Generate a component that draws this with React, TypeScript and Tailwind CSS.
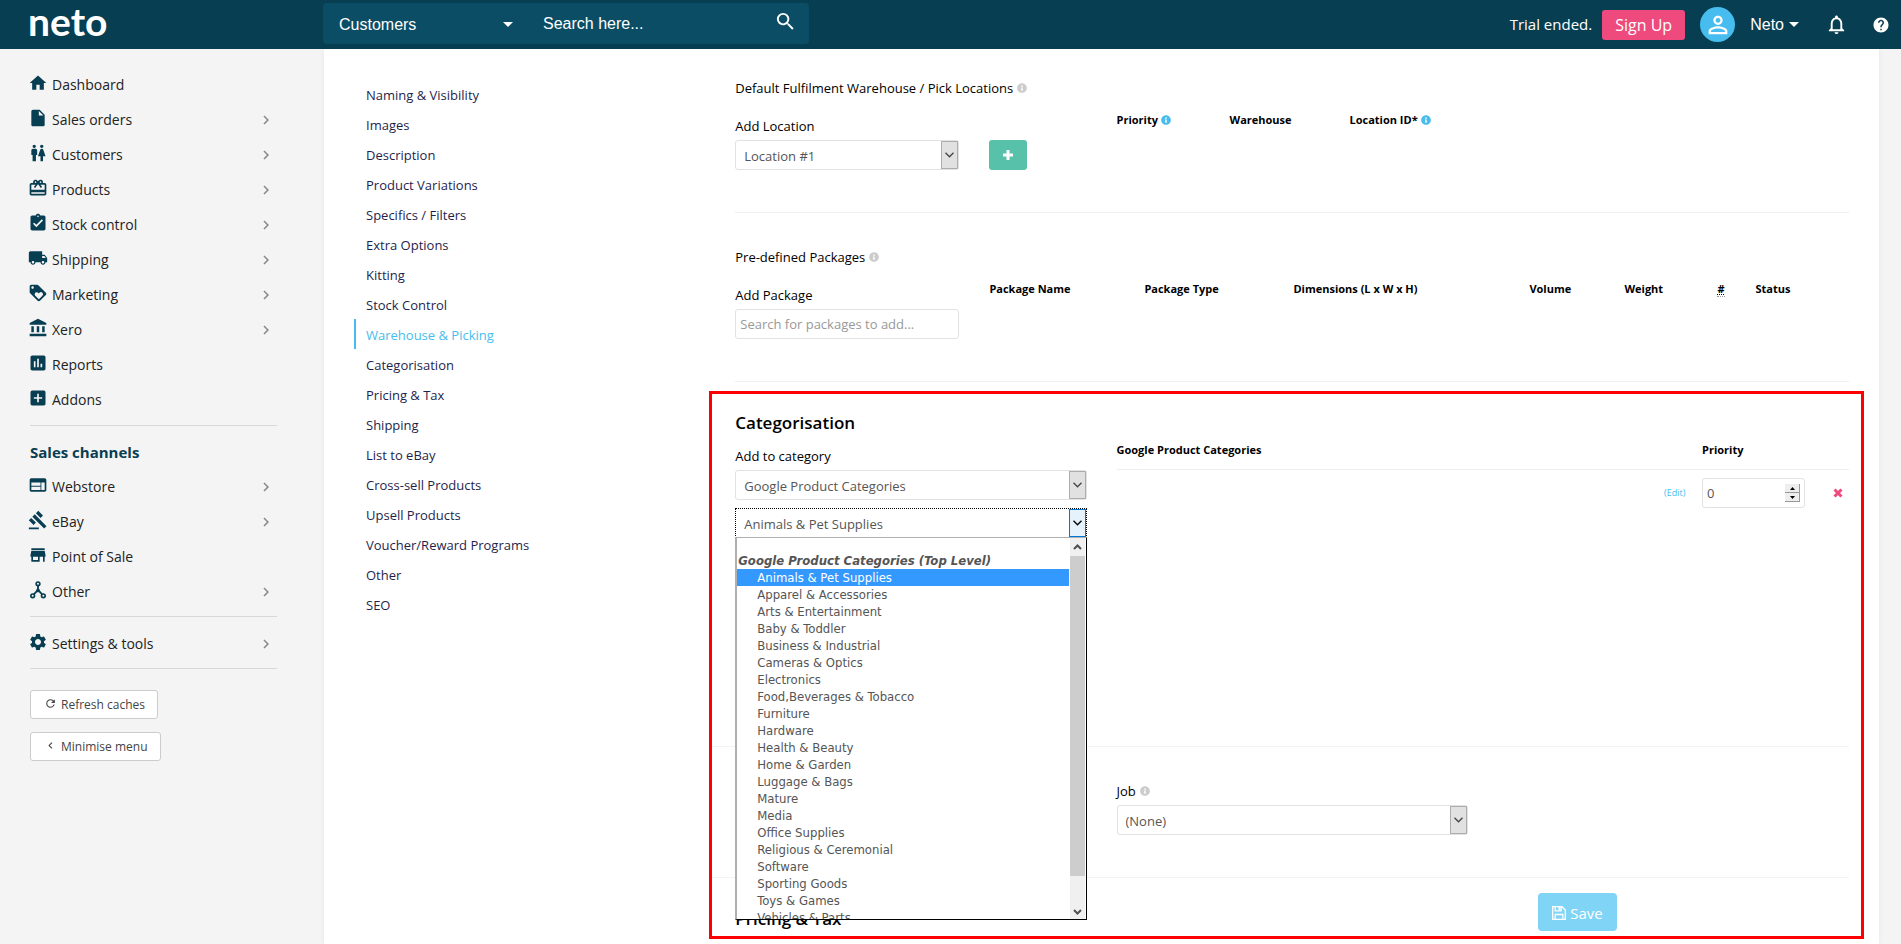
import type { ReactNode } from "react";
import type { IconType } from "react-icons";
import {
  MdAccountBalance,
  MdAddBox,
  MdAssessment,
  MdAssignmentTurnedIn,
  MdCardGiftcard,
  MdChevronLeft,
  MdChevronRight,
  MdGavel,
  MdHelp,
  MdHome,
  MdInsertDriveFile,
  MdLocalShipping,
  MdLoyalty,
  MdNotificationsNone,
  MdPersonOutline,
  MdRefresh,
  MdSearch,
  MdSettings,
  MdStore,
  MdWc,
  MdWeb,
} from "react-icons/md";
import { FaInfoCircle } from "react-icons/fa";

function HubIcon({ className }: { className?: string }) {
  return (
    <svg
      viewBox="0 0 24 24"
      className={className}
      fill="none"
      stroke="currentColor"
      strokeWidth="2"
      aria-hidden="true"
    >
      <circle cx="12" cy="4.6" r="2.2" />
      <circle cx="5.6" cy="19" r="2.2" />
      <circle cx="18.400" cy="19" r="2.2" />
      <path d="M12 7v6M11.500 12.500l-4.500 4.800M12.500 12.500l4.500 4.800" strokeWidth="2.200" />
      <circle cx="12" cy="12.500" r="1.200" fill="currentColor" />
    </svg>
  );
}

type MenuItem = {
  label: string;
  icon: IconType | typeof HubIcon;
  more?: boolean;
};

const mainMenu: MenuItem[] = [
  { label: "Dashboard", icon: MdHome },
  { label: "Sales orders", icon: MdInsertDriveFile, more: true },
  { label: "Customers", icon: MdWc, more: true },
  { label: "Products", icon: MdCardGiftcard, more: true },
  { label: "Stock control", icon: MdAssignmentTurnedIn, more: true },
  { label: "Shipping", icon: MdLocalShipping, more: true },
  { label: "Marketing", icon: MdLoyalty, more: true },
  { label: "Xero", icon: MdAccountBalance, more: true },
  { label: "Reports", icon: MdAssessment },
  { label: "Addons", icon: MdAddBox },
];

const channelMenu: MenuItem[] = [
  { label: "Webstore", icon: MdWeb, more: true },
  { label: "eBay", icon: MdGavel, more: true },
  { label: "Point of Sale", icon: MdStore },
  { label: "Other", icon: HubIcon, more: true },
];

const settingsMenu: MenuItem[] = [
  { label: "Settings & tools", icon: MdSettings, more: true },
];

const sections = [
  "Naming & Visibility",
  "Images",
  "Description",
  "Product Variations",
  "Specifics / Filters",
  "Extra Options",
  "Kitting",
  "Stock Control",
  "Warehouse & Picking",
  "Categorisation",
  "Pricing & Tax",
  "Shipping",
  "List to eBay",
  "Cross-sell Products",
  "Upsell Products",
  "Voucher/Reward Programs",
  "Other",
  "SEO",
];

const categories = [
  "Animals & Pet Supplies",
  "Apparel & Accessories",
  "Arts & Entertainment",
  "Baby & Toddler",
  "Business & Industrial",
  "Cameras & Optics",
  "Electronics",
  "Food,Beverages & Tobacco",
  "Furniture",
  "Hardware",
  "Health & Beauty",
  "Home & Garden",
  "Luggage & Bags",
  "Mature",
  "Media",
  "Office Supplies",
  "Religious & Ceremonial",
  "Software",
  "Sporting Goods",
  "Toys & Games",
  "Vehicles & Parts",
];

function Caret() {
  return (
    <svg viewBox="0 0 10 5" className="h-[5px] w-[10px]" aria-hidden="true">
      <path d="M0 0h10L5 5z" fill="currentColor" />
    </svg>
  );
}

function Info({ blue }: { blue?: boolean }) {
  return (
    <FaInfoCircle
      className={`size-[10px] shrink-0 ${blue ? "text-[#46bdee]" : "text-[#cccccc]"}`}
      aria-hidden="true"
    />
  );
}

function Header() {
  return (
    <header className="flex h-[49px] items-center bg-[#083e52] text-base text-white">
      <a
        href="#home"
        className="w-[323px] shrink-0 pb-2 pl-7 font-[Lato] text-[39px] leading-[40px] font-bold"
      >
        neto
      </a>
      <form className="mb-[2px] flex h-[41px] min-w-0 flex-[0_1_486px] items-center rounded bg-[#0b4d65] font-['Liberation_Sans',sans-serif]">
        <div className="relative h-full w-[205px] shrink-0">
          <select
            aria-label="Search in"
            className="h-full w-full appearance-none bg-transparent pt-[3px] pl-4 outline-none"
          >
            <option>Customers</option>
          </select>
          <span className="pointer-events-none absolute top-[19px] right-[15px]">
            <Caret />
          </span>
        </div>
        <input
          type="text"
          aria-label="Search"
          placeholder="Search here..."
          className="h-full min-w-0 flex-1 bg-transparent pl-[15px] outline-none placeholder:text-white"
        />
        <button type="button" aria-label="Search" className="mr-3 mb-1">
          <MdSearch className="size-[23px]" />
        </button>
      </form>
      <div className="ml-auto flex shrink-0 items-center font-['Open_Sans',sans-serif]">
        <span className="text-[15px]">Trial ended.</span>
        <button
          type="button"
          className="ml-[10px] h-[30px] w-[83px] rounded-[3px] bg-[#ef4a7e]"
        >
          Sign Up
        </button>
        <span className="ml-[15px] flex size-[35px] items-center justify-center rounded-full bg-[#46bdee]">
          <MdPersonOutline className="size-[28px]" />
        </span>
        <button
          type="button"
          className="ml-[15px] flex items-center gap-[5px] font-['Liberation_Sans',sans-serif]"
        >
          Neto
          <Caret />
        </button>
        <button type="button" aria-label="Notifications" className="ml-[26px]">
          <MdNotificationsNone className="size-[23px]" />
        </button>
        <button type="button" aria-label="Help" className="mr-[11px] ml-6">
          <MdHelp className="size-[18px]" />
        </button>
      </div>
    </header>
  );
}

function Menu({ items }: { items: MenuItem[] }) {
  return (
    <ul>
      {items.map(({ label, icon: Icon, more }) => (
        <li key={label}>
          <a href="#menu" className="-ml-[2px] flex h-[35px] items-center gap-1">
            <Icon className="mb-[3px] size-5 text-[#083e52]" />
            <span className="flex-1">{label}</span>
            {more && <MdChevronRight className="mr-[2px] size-[18px] text-[#888888]" />}
          </a>
        </li>
      ))}
    </ul>
  );
}

function SideButton({ icon, children }: { icon: ReactNode; children: ReactNode }) {
  return (
    <button
      type="button"
      className="mb-[13px] flex h-[29px] items-center gap-1 rounded-[3px] border border-[#cccccc] bg-white pr-3 pl-[13px] text-[12px] text-[#444444]"
    >
      {icon}
      {children}
    </button>
  );
}

function Sidebar() {
  return (
    <aside className="w-[324px] shrink-0 pt-[18px] pr-[47px] pl-[30px] text-[14px] text-[#222222]">
      <Menu items={mainMenu} />
      <hr className="mt-2 border-[#d8d8d8]" />
      <h2 className="flex h-[43px] items-center pt-[9px] text-[15px] font-bold text-[#083e52]">
        Sales channels
      </h2>
      <Menu items={channelMenu} />
      <hr className="mt-[7px] mb-[9px] border-[#d8d8d8]" />
      <Menu items={settingsMenu} />
      <hr className="mt-[7px] mb-[21px] border-[#d8d8d8]" />
      <SideButton icon={<MdRefresh className="mb-[3px] size-[13px]" />}>
        Refresh caches
      </SideButton>
      <SideButton icon={<MdChevronLeft className="mb-[3px] size-[13px]" />}>
        Minimise menu
      </SideButton>
    </aside>
  );
}

function SectionNav() {
  return (
    <nav className="w-1/4 shrink-0 px-[15px] pt-[30px] text-[13px] text-[#1f1f4d]">
      {sections.map((name) => (
        <a
          key={name}
          href="#section"
          className={`flex h-[30px] items-center border-l-2 pt-[3px] pl-[10px] ${
            name === "Warehouse & Picking"
              ? "border-[#46bdee] font-medium text-[#46bdee]"
              : "border-transparent"
          }`}
        >
          {name}
        </a>
      ))}
    </nav>
  );
}

function SelectBox({
  id,
  value,
  open,
  label,
}: {
  id: string;
  value: string;
  open?: boolean;
  label?: string;
}) {
  return (
    <div className="relative h-[30px]">
      <select
        id={id}
        aria-label={label}
        className={`h-full w-full appearance-none bg-white pt-[3px] pl-2 text-[13px] text-[#555555] outline-none ${
          open ? "border border-dotted border-black" : "rounded-[3px] border border-[#e2e2e2]"
        }`}
      >
        <option>{value}</option>
      </select>
      <span
        className={`pointer-events-none absolute top-px right-px bottom-px flex w-[17px] items-center justify-center border ${
          open
            ? "border-[#0078d7] bg-[#e5f1fb] text-black"
            : "border-[#adadad] bg-[#e1e1e1] text-[#444444]"
        }`}
      >
        <svg viewBox="0 0 9 6" className="h-[6px] w-[9px]" fill="none" stroke="currentColor">
          <path d="M.5.8l4 4 4-4" strokeWidth="1.3" />
        </svg>
      </span>
    </div>
  );
}

function CategoryList() {
  return (
    <div className="absolute top-full right-0 left-0 z-10 -mt-px flex h-[383px] border-t border-r border-b border-l-2 border-t-[#b0b0b0] border-r-black border-b-black border-l-[#b0b0b0] bg-white font-['DejaVu_Sans_Condensed',sans-serif] text-[13px] leading-[17px] text-[#555555]">
      <div className="flex-1 overflow-hidden pt-[14px]">
        <div className="pl-px font-bold italic">Google Product Categories (Top Level)</div>
        <ul role="listbox" aria-label="Google Product Categories">
          {categories.map((name, i) => (
            <li
              key={name}
              role="option"
              aria-selected={i === 0}
              className={`pl-5 ${i === 0 ? "bg-[#3399ff] text-white" : ""}`}
            >
              {name}
            </li>
          ))}
        </ul>
      </div>
      <div className="mr-px ml-px flex w-[15px] flex-col items-center bg-[#f0f0f0] text-[#505050]">
        <svg viewBox="0 0 9 6" className="my-[6px] h-[6px] w-[9px]" fill="none" stroke="currentColor">
          <path d="M1 5l3.500-3.500L8 5" strokeWidth="2" />
        </svg>
        <div className="h-[320px] w-full bg-[#cdcdcd]" />
        <svg viewBox="0 0 9 6" className="mt-auto mb-1 h-[6px] w-[9px]" fill="none" stroke="currentColor">
          <path d="M1 1l3.500 3.500L8 1" strokeWidth="2" />
        </svg>
      </div>
    </div>
  );
}

const th = "p-0 text-left align-top font-bold whitespace-nowrap";

function Locations() {
  return (
    <section className="border-b border-[#f0f0f0] pt-[29px] pb-[42px]">
      <h3 className="flex items-center gap-1 text-[13px] leading-5 font-medium">
        Default Fulfilment Warehouse / Pick Locations <Info />
      </h3>
      <div className="-mx-[15px] flex pt-[14px]">
        <div className="flex w-1/3 pt-1">
          <div className="w-2/3 px-[15px]">
            <label htmlFor="location" className="mb-1 block text-[13px] leading-5 font-medium">
              Add Location
            </label>
            <SelectBox id="location" value="Location #1" />
          </div>
          <div className="w-1/3 px-[15px] pt-6">
            <button
              type="button"
              aria-label="Add location"
              className="flex h-[30px] w-[38px] items-center justify-center rounded-[3px] bg-[#57c1a9] text-white"
            >
              <svg viewBox="0 0 10 10" className="size-[10px]" stroke="currentColor">
                <path d="M5 0v10M0 5h10" strokeWidth="3" />
              </svg>
            </button>
          </div>
        </div>
        <div className="w-2/3 px-[15px]">
          <table className="text-[11px] leading-4">
            <thead>
              <tr>
                <th className={`${th} w-[113px]`}>
                  <span className="flex items-center gap-[3px]">
                    Priority <Info blue />
                  </span>
                </th>
                <th className={`${th} w-[120px]`}>Warehouse</th>
                <th className={th}>
                  <span className="flex items-center gap-[3px]">
                    Location ID* <Info blue />
                  </span>
                </th>
              </tr>
            </thead>
          </table>
        </div>
      </div>
    </section>
  );
}

function Packages() {
  return (
    <section className="border-b border-[#f0f0f0] pt-[34px] pb-[42px]">
      <h3 className="flex items-center gap-1 text-[13px] leading-5 font-medium">
        Pre-defined Packages <Info />
      </h3>
      <div className="-mx-[15px] flex pt-[14px]">
        <div className="w-2/9 px-[15px] pt-1">
          <label htmlFor="package" className="mb-1 block text-[13px] leading-5 font-medium">
            Add Package
          </label>
          <input
            id="package"
            type="text"
            placeholder="Search for packages to add..."
            className="h-[30px] w-full rounded-[3px] border border-[#e2e2e2] px-1 text-[13px] placeholder:text-[#999999]"
          />
        </div>
        <div className="w-7/9 px-[15px]">
          <table className="w-full table-fixed text-[11px] leading-4">
            <thead>
              <tr>
                <th className={`${th} w-[155px]`}>Package Name</th>
                <th className={`${th} w-[149px]`}>Package Type</th>
                <th className={`${th} w-[236px]`}>Dimensions (L x W x H)</th>
                <th className={`${th} w-[95px]`}>Volume</th>
                <th className={`${th} w-[93px]`}>Weight</th>
                <th className={`${th} w-[38px]`}>
                  <abbr
                    title="Quantity"
                    className="border-b border-dotted border-[#999999] underline decoration-dotted"
                  >
                    #
                  </abbr>
                </th>
                <th className={th}>Status</th>
              </tr>
            </thead>
          </table>
        </div>
      </div>
    </section>
  );
}

function Categorisation() {
  return (
    <section className="mt-[9px] -mr-[15px] -ml-[26px] border-3 border-[#ff0000] pt-[17px] pr-3 pb-[5px] pl-[23px]">
      <h2 className="text-[17px] leading-6 font-semibold">Categorisation</h2>
      <div className="-mx-[15px] flex h-[311px] pt-[7px]">
        <div className="w-1/3 px-[15px] pt-1">
          <label htmlFor="category" className="mb-1 block text-[13px] leading-5 font-medium">
            Add to category
          </label>
          <SelectBox id="category" value="Google Product Categories" />
          <div className="relative mt-2">
            <SelectBox id="subcategory" label="Subcategory" value="Animals & Pet Supplies" open />
            <CategoryList />
          </div>
        </div>
        <div className="w-2/3 px-[15px]">
          <table className="w-full text-[11px]">
            <thead>
              <tr className="border-b border-[#eeeeee] leading-4">
                <th className={`${th} pb-[11px]`} colSpan={2}>
                  Google Product Categories
                </th>
                <th className={th} colSpan={2}>
                  Priority
                </th>
              </tr>
            </thead>
            <tbody>
              <tr>
                <td />
                <td className="w-[38px] pt-2 text-[9px]">
                  <a href="#edit" className="text-[#46bdee]">
                    (Edit)
                  </a>
                </td>
                <td className="w-[103px] pt-2">
                  <div className="relative">
                    <input
                      type="text"
                      aria-label="Priority"
                      defaultValue="0"
                      className="h-[30px] w-full rounded-[3px] border border-[#e2e2e2] px-1 text-[13px] text-[#555555]"
                    />
                    <span className="absolute top-[6px] right-[5px] flex h-[18px] w-[15px] flex-col border-r border-b border-[#999999] bg-[#eeeeee] text-black">
                      <span className="flex flex-1 items-center justify-center border-b border-[#999999]">
                        <svg viewBox="0 0 5 3" className="h-[3px] w-[5px]">
                          <path d="M0 3h5L2.500 0z" />
                        </svg>
                      </span>
                      <span className="flex flex-1 items-center justify-center">
                        <svg viewBox="0 0 5 3" className="h-[3px] w-[5px]">
                          <path d="M0 0h5L2.500 3z" />
                        </svg>
                      </span>
                    </span>
                  </div>
                </td>
                <td className="w-[44px] pt-2">
                  <button
                    type="button"
                    aria-label="Remove"
                    className="mr-[6px] ml-auto block text-[#ef4a7e]"
                  >
                    <svg viewBox="0 0 10 10" className="size-[10px]" stroke="currentColor">
                      <path d="M1.500 1.500l7 7M8.500 1.500l-7 7" strokeWidth="3" />
                    </svg>
                  </button>
                </td>
              </tr>
            </tbody>
          </table>
        </div>
      </div>
      <div className="-ml-[23px] border-y border-[#f3f3f3] pt-[34px] pb-[42px]">
        <div className="-mr-[15px] ml-2 flex">
          <div className="w-1/3 px-[15px]" />
          <div className="w-1/3 px-[15px]">
            <label
              htmlFor="job"
              className="mb-1 flex items-center gap-1 text-[13px] leading-5 font-medium"
            >
              Job <Info />
            </label>
            <SelectBox id="job" value="(None)" />
          </div>
        </div>
      </div>
      <div className="flex items-start pt-[15px]">
        <h2 className="mt-[14px] flex-1 text-[17px] leading-6 font-semibold">Pricing &amp; Tax</h2>
        <button
          type="button"
          className="mr-[232px] flex h-[38px] w-[79px] items-center justify-center gap-1 rounded bg-[#80d4f5] pt-[2px] text-[15px] text-white"
        >
          <svg
            viewBox="0 0 14 14"
            className="size-[14px]"
            fill="none"
            stroke="currentColor"
            strokeWidth="1.300"
            aria-hidden="true"
          >
            <path d="M.7.7h9.300l3.300 3.300v9.300H.7z" />
            <path d="M3.200 13V8.500h7.600V13M3.200.7v4.200h6V.7" />
            <path d="M6.500 1h2v3h-2z" fill="currentColor" stroke="none" />
          </svg>
          Save
        </button>
      </div>
    </section>
  );
}

export default function App() {
  return (
    <div className="min-h-screen bg-[#f4f4f4] font-['Open_Sans',sans-serif] text-black">
      <Header />
      <div className="flex">
        <Sidebar />
        <main className="mr-[22px] flex min-h-[895px] min-w-0 flex-1 bg-white px-[15px] shadow-[0_0_6px_rgba(0,0,0,0.06)]">
          <SectionNav />
          <div className="w-3/4 min-w-0 px-[15px]">
            <Locations />
            <Packages />
            <Categorisation />
          </div>
        </main>
      </div>
    </div>
  );
}
